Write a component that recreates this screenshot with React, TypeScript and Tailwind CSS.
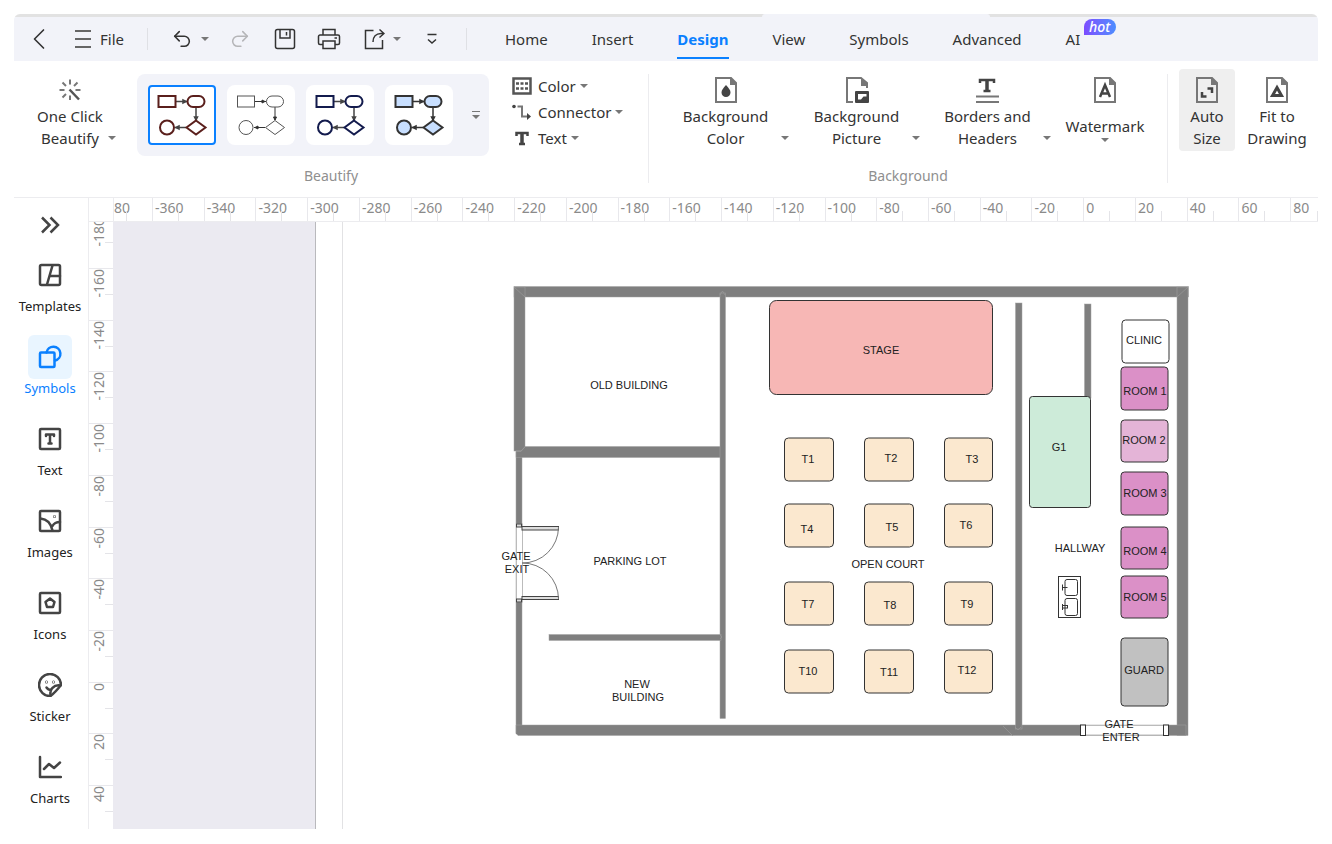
import type { ReactNode } from "react";
import { ChevronLeft, Redo2, Undo2 } from "lucide-react";

const tabs = ["Home", "Insert", "Design", "View", "Symbols", "Advanced"];

const themes = [
  { name: "Maroon outline", stroke: "#5a1f1c", fill: "none", link: "#444", width: 2, active: true },
  { name: "Thin outline", stroke: "#555", fill: "none", link: "#333", width: 1, active: false },
  { name: "Navy outline", stroke: "#131b4d", fill: "none", link: "#444", width: 2, active: false },
  { name: "Blue filled", stroke: "#333", fill: "#c8dfff", link: "#333", width: 2, active: false },
];

const topMarks = [
  -360, -340, -320, -300, -280, -260, -240, -220, -200, -180, -160,
  -140, -120, -100, -80, -60, -40, -20, 0, 20, 40, 60,
];
const leftMarks = [-160, -140, -120, -100, -80, -60, -40, -20, 0, 20];

const tableCols = [785, 865, 945];
const tableRows = [438, 504, 582, 650];

const rooms = [
  { x: 1122, y: 320, w: 47, h: 43, fill: "#ffffff" },
  { x: 1121, y: 367, w: 47, h: 43, fill: "#db90c7" },
  { x: 1121, y: 420, w: 47, h: 42, fill: "#e4b4d7" },
  { x: 1121, y: 472, w: 47, h: 43, fill: "#db90c7" },
  { x: 1121, y: 527, w: 47, h: 42, fill: "#db90c7" },
  { x: 1121, y: 576, w: 47, h: 42, fill: "#db90c7" },
  { x: 1121, y: 638, w: 47, h: 68, fill: "#c1c1c1" },
];

const labels = [
  { text: "OLD BUILDING", x: 629, y: 389 },
  { text: "PARKING LOT", x: 630, y: 565 },
  { text: "NEW", x: 637, y: 688 },
  { text: "BUILDING", x: 638, y: 701 },
  { text: "STAGE", x: 881, y: 354 },
  { text: "OPEN COURT", x: 888, y: 568 },
  { text: "HALLWAY", x: 1080, y: 552 },
  { text: "G1", x: 1059, y: 451 },
  { text: "CLINIC", x: 1144, y: 344 },
  { text: "ROOM 1", x: 1145, y: 395 },
  { text: "ROOM 2", x: 1144, y: 444 },
  { text: "ROOM 3", x: 1145, y: 497 },
  { text: "ROOM 4", x: 1145, y: 555 },
  { text: "ROOM 5", x: 1145, y: 601 },
  { text: "GUARD", x: 1144, y: 674 },
  { text: "GATE", x: 516, y: 560 },
  { text: "EXIT", x: 517, y: 573 },
  { text: "GATE", x: 1119, y: 728 },
  { text: "ENTER", x: 1121, y: 741 },
  { text: "T1", x: 808, y: 463 },
  { text: "T2", x: 891, y: 462 },
  { text: "T3", x: 972, y: 463 },
  { text: "T4", x: 807, y: 533 },
  { text: "T5", x: 892, y: 531 },
  { text: "T6", x: 966, y: 529 },
  { text: "T7", x: 808, y: 608 },
  { text: "T8", x: 890, y: 609 },
  { text: "T9", x: 967, y: 608 },
  { text: "T10", x: 808, y: 675 },
  { text: "T11", x: 889, y: 676 },
  { text: "T12", x: 967, y: 674 },
];

function Caret() {
  return (
    <svg viewBox="0 0 8 6" className="h-1.5 w-2 shrink-0" aria-hidden="true">
      <path d="M0 1h8L4 5z" fill="#777" />
    </svg>
  );
}

function Flow({ stroke, fill, link, width }: { stroke: string; fill: string; link: string; width: number }) {
  return (
    <svg viewBox="0 0 68 60" className="h-full w-full" fill="none" aria-hidden="true">
      <g stroke={link} strokeWidth={width > 1 ? 1.5 : 1}>
        <path d="M28 16.500h11M48 22v13M38 42.500H27" />
        <path d="M35 15l3 1.500-3 1.500zM46.500 32l1.500 3 1.500-3zM31 41l-3 1.500 3 1.500z" fill={link} />
      </g>
      <g stroke={stroke} fill={fill} strokeWidth={width}>
        <rect x="10.500" y="11" width="17" height="11" />
        <rect x="39.500" y="11" width="17" height="11" rx="5.500" />
        <circle cx="19" cy="42.500" r="7" />
        <path d="M48 35.500l9.500 7-9.500 7-9.500-7z" />
      </g>
    </svg>
  );
}

function PageIcon({ children }: { children: ReactNode }) {
  return (
    <svg viewBox="0 0 24 26" className="h-[26px] w-6" fill="none" aria-hidden="true">
      <path d="M2 1h15l5 5v19H2z" stroke="#777" strokeWidth="2" />
      <path d="M16 1h1l5 5v2h-6z" fill="#777" />
      {children}
    </svg>
  );
}

function RibbonButton({ icon, lines, width, caret = true, active = false }: {
  icon: ReactNode;
  lines: string[];
  width: string;
  caret?: boolean;
  active?: boolean;
}) {
  const cols = caret ? "grid-cols-[12px_1fr_12px]" : "grid-cols-1";
  return (
    <button className={`grid h-[82px] items-end justify-items-center rounded pt-2 ${cols} ${width} ${active ? "bg-[#efefef]" : ""}`}>
      {caret && <span />}
      <span className="flex flex-col items-center self-start whitespace-nowrap leading-[22px]">
        <span className="mb-0.5 flex h-[26px] items-center">{icon}</span>
        {lines.map((line) => (
          <span key={line}>{line}</span>
        ))}
      </span>
      {caret && <span className="pb-2.5"><Caret /></span>}
    </button>
  );
}

function SideIcon({ children }: { children: ReactNode }) {
  return (
    <svg viewBox="0 0 24 24" className="size-6" fill="none" stroke="currentColor" strokeWidth="2.500" strokeLinejoin="round" strokeLinecap="round" aria-hidden="true">
      {children}
    </svg>
  );
}

const sideItems = [
  {
    name: "Templates",
    icon: <><rect x="2" y="2" width="20" height="20" rx="1.500" /><path d="M14.500 2.500 9 21.500M12 13h10" /></>,
  },
  {
    name: "Symbols",
    active: true,
    icon: <><path d="M8.500 7.500A7 7 0 1 1 17 15.500" /><rect x="2" y="7.500" width="14.500" height="14.500" rx="1" /></>,
  },
  {
    name: "Text",
    icon: <><rect x="2" y="2" width="20" height="20" rx="1" /><path d="M8 9V7.500h8V9M12 7.500v8.500M10.500 16.500h3" /></>,
  },
  {
    name: "Images",
    icon: <><rect x="2" y="2" width="20" height="20" rx="1" /><path d="M2.500 9.500c6 .5 10.500 5 12 12M14.500 17c1.500-3 4-4 7.500-4" /><circle cx="16.500" cy="7.500" r="0.300" /></>,
  },
  {
    name: "Icons",
    icon: <><rect x="2" y="2" width="20" height="20" rx="1" /><path d="m12 7.500 4.500 3.500-1.500 5H9l-1.500-5z" /></>,
  },
  {
    name: "Sticker",
    icon: <><path d="M12.500 23A11 11 0 1 1 23 12c-3.500 4.500-6.500 8-10.500 11z" /><path d="M12.500 22.500c-1-6 3-11 10-10M8.500 14.500c1 1.500 2.500 2.500 4.500 2.500" /><circle cx="8.500" cy="9" r="0.300" /><circle cx="15.500" cy="9" r="0.300" /></>,
  },
  {
    name: "Charts",
    icon: <><path d="M2 2v20h21" /><path d="m6 14 5-5 5 4 6-5.500" /></>,
  },
];

function FloorPlan() {
  return (
    <svg viewBox="500 280 700 470" className="h-[470px] w-[700px] shrink-0" role="img" aria-label="Floor plan">
      {/* Walls */}
      <g fill="#7f7f7f" stroke="#a3a3a3" strokeWidth="0.500">
        <rect x="514" y="286.500" width="674.500" height="10.500" />
        <rect x="1177" y="287" width="11" height="448.500" />
        <rect x="514" y="287" width="11" height="164" />
        <rect x="516" y="451" width="6" height="282" />
        <path d="M525 446.500h199v11H516v-6h5z" />
        <path d="M516 725h670v10.500H518l-2-2z" />
        <rect x="720" y="293" width="5.500" height="425.500" />
        <rect x="549" y="634.500" width="172" height="6" />
        <rect x="1015.500" y="303" width="6.500" height="426" />
        <rect x="1084.500" y="304" width="6.500" height="94" />
      </g>
      <g stroke="#999" strokeWidth="0.700" fill="none">
        <path d="M514 287l11 10M1188 287l-11 10M521 451l4-4M1003 726l10 10M1015 727l3 3 3-3" />
        <path d="M720 295l2.500-4 2.500 4M720 635l2 2-2 2" />
      </g>

      {/* Exit gate */}
      <g fill="none" stroke="#444">
        <rect x="516.500" y="524" width="6" height="78" fill="#fff" stroke="#bbb" />
        <rect x="516.500" y="524" width="5" height="3" fill="#ddd" />
        <rect x="516.500" y="599" width="5" height="3" fill="#ddd" />
        <rect x="522" y="526.500" width="36.500" height="3.500" fill="#ddd" />
        <rect x="522" y="596.500" width="36.500" height="3" fill="#ddd" />
        <path d="M558.500 527A36 36 0 0 1 522 563A36 36 0 0 1 558.500 599" stroke="#777" />
      </g>

      {/* Entrance gate */}
      <rect x="1085" y="725.500" width="79" height="9.500" fill="#fff" stroke="#bbb" />
      <g fill="#fff" stroke="#333">
        <rect x="1080.500" y="725" width="5" height="10.500" />
        <rect x="1163.500" y="725" width="5" height="10.500" />
      </g>

      {/* Furniture and rooms */}
      <g stroke="#333" strokeWidth="1">
        <rect x="769.500" y="300.500" width="223" height="94" rx="7" fill="#f7b7b5" />
        <rect x="1029.500" y="396.500" width="61" height="111" rx="3" fill="#cdebd9" />
        {tableRows.map((y) =>
          tableCols.map((x) => (
            <rect key={`${x}-${y}`} x={x - 0.5} y={y} width={x === 945 ? 48 : 49} height="43" rx="4" fill="#fbe8cf" />
          ))
        )}
        {rooms.map((room) => (
          <rect key={room.y} x={room.x} y={room.y} width={room.w} height={room.h} rx="3.500" fill={room.fill} />
        ))}
      </g>

      {/* Double sink */}
      <g fill="none" stroke="#333">
        <rect x="1058.500" y="576.500" width="22" height="41" />
        <rect x="1065" y="579.500" width="12.500" height="16" rx="2" />
        <rect x="1065" y="598.500" width="12.500" height="17" rx="2" />
        <path d="M1062.500 584.500v6M1062.500 587.500h5M1062.500 604v6" />
        <rect x="1062.500" y="605.500" width="5" height="2.500" />
      </g>

      <g className="font-['Liberation_Sans',Arial,sans-serif] text-[11px]" fill="#222" textAnchor="middle">
        {labels.map((label) => (
          <text key={`${label.text}-${label.y}`} x={label.x} y={label.y}>{label.text}</text>
        ))}
      </g>
    </svg>
  );
}

function MenuBar() {
  return (
    <div className="flex h-11 items-center bg-[#f2f3f9]">
      <button aria-label="Back" className="flex w-[50px] justify-center">
        <ChevronLeft className="size-9" strokeWidth={1.1} />
      </button>
      <button className="ml-[11px] flex w-[50px] items-center gap-[9px]">
        <svg viewBox="0 0 16 18" className="h-[18px] w-4 shrink-0" stroke="#666" strokeWidth="1.800" aria-hidden="true">
          <path d="M0 1h16M0 9h16M0 17h16" />
        </svg>
        File
      </button>
      <span className="ml-[22px] h-[22px] w-px bg-[#dfe0e5]" />

      <div className="ml-[23px] flex items-center gap-5">
        <button aria-label="Undo" className="flex items-center gap-2">
          <Undo2 className="size-[22px]" strokeWidth={1.7} />
          <Caret />
        </button>
        <button aria-label="Redo" className="text-[#b5b5b8]">
          <Redo2 className="size-[22px]" strokeWidth={1.7} />
        </button>
        <button aria-label="Save" className="ml-0.5">
          <svg viewBox="0 0 24 24" className="size-6" fill="none" stroke="currentColor" strokeWidth="1.500" aria-hidden="true">
            <rect x="2.500" y="2.500" width="19" height="19" rx="2" />
            <path d="M7 2.500v8.500h10V2.500M13.500 5v3.500" />
          </svg>
        </button>
        <button aria-label="Print">
          <svg viewBox="0 0 24 24" className="size-6" fill="none" stroke="currentColor" strokeWidth="1.500" aria-hidden="true">
            <path d="M6 8V2.500h12V8M6 17.500H3a1.500 1.500 0 0 1-1.500-1.500V9.500A1.500 1.500 0 0 1 3 8h18a1.500 1.500 0 0 1 1.500 1.500V16a1.500 1.500 0 0 1-1.500 1.500h-3M17.500 11h2.500" />
            <rect x="6" y="14" width="12" height="7.500" />
          </svg>
        </button>
        <button aria-label="Share" className="flex items-center gap-2">
          <svg viewBox="0 0 24 24" className="size-6" fill="none" stroke="currentColor" strokeWidth="1.500" aria-hidden="true">
            <path d="M12.500 3.500H4.500v18h17V13" />
            <path d="M18.500 2.500l4.500 4-4.500 4M23 6.500h-3c-5 0-8 3.500-8 8.500" />
          </svg>
          <Caret />
        </button>
        <button aria-label="More quick actions">
          <svg viewBox="0 0 16 16" className="ml-[3px] size-4" fill="none" stroke="currentColor" strokeWidth="1.500" aria-hidden="true">
            <path d="M3.500 3.500h9M4 8.500l4 3.500 4-3.500" />
          </svg>
        </button>
      </div>
      <span className="ml-[26px] h-[22px] w-px bg-[#dfe0e5]" />

      <nav className="ml-[38px] flex h-full gap-11">
        {tabs.map((tab) => (
          <button
            key={tab}
            className={`mb-0.5 border-b-2 pt-1 ${tab === "Design" ? "border-[#0a80ff] font-bold text-[#0a80ff]" : "border-transparent"}`}
          >
            {tab}
          </button>
        ))}
        <button className="relative mb-0.5 border-b-2 border-transparent pt-1">
          AI
          <span className="absolute left-[18px] top-0.5 h-4 w-8 rounded-lg rounded-bl-none bg-linear-to-r from-[#7b4bff] to-[#4a8cff] text-[14px] font-medium italic leading-4 text-white">
            hot
          </span>
        </button>
      </nav>
    </div>
  );
}

function Ribbon() {
  return (
    <div className="flex h-[137px] overflow-hidden border-b border-[#ececef] bg-white pt-2">
      <section className="flex w-[634px] shrink-0 flex-col">
        <div className="flex h-24 shrink-0">
          <div className="ml-2">
            <RibbonButton
              width="w-24"
              lines={["One Click", "Beautify"]}
              icon={
                <svg viewBox="0 0 24 24" className="size-6" fill="none" stroke="#555" strokeWidth="2" aria-hidden="true">
                  <path d="M12 1.500v5M12 17.500v4.500M1.500 12h5M17.500 12h5M4.500 4.500 8 8M19.500 4.500 16 8M4.500 19.500 8 16" stroke="#777" />
                  <path d="M11.500 11.500l9.500 10" strokeWidth="2.500" />
                </svg>
              }
            />
          </div>
          <div className="ml-[19px] mt-[5px] flex h-[82px] w-[352px] items-center gap-[11px] rounded-lg bg-[#f2f3f9] pl-[11px]">
            {themes.map((theme) => (
              <button
                key={theme.name}
                aria-label={theme.name}
                className={`h-[60px] w-[68px] bg-white ${theme.active ? "rounded outline-2 -outline-offset-2 outline-[#0a80ff]" : "rounded-lg"}`}
              >
                <Flow stroke={theme.stroke} fill={theme.fill} link={theme.link} width={theme.width} />
              </button>
            ))}
            <button aria-label="More styles" className="ml-2 flex flex-col items-center">
              <span className="h-px w-2 bg-[#777]" />
              <span className="mt-0.5"><Caret /></span>
            </button>
          </div>
          <div className="ml-[23px] mt-1 flex flex-col items-start">
            <button className="flex h-[26px] items-center gap-1.5">
              <svg viewBox="0 0 20 18" className="h-[18px] w-5" fill="none" stroke="#555" aria-hidden="true">
                <rect x="1.500" y="1.500" width="17" height="15" strokeWidth="2.500" />
                <path d="M4 6.500h12M4 11.500h12" strokeWidth="2.500" strokeDasharray="3 1.500" />
              </svg>
              <span className="flex items-center gap-1">Color <Caret /></span>
            </button>
            <button className="flex h-[26px] items-center gap-1.5">
              <svg viewBox="0 0 20 18" className="h-[18px] w-5" fill="none" stroke="#777" strokeWidth="2" aria-hidden="true">
                <path d="M5.500 3.500H10v10h5" />
                <circle cx="2" cy="3.500" r="1.800" fill="#444" stroke="none" />
                <path d="M15 10l4 3.500-4 3.500z" fill="#444" stroke="none" />
              </svg>
              <span className="flex items-center gap-1">Connector <Caret /></span>
            </button>
            <button className="flex h-[26px] items-center gap-1.5">
              <svg viewBox="0 0 20 18" className="h-[18px] w-5" fill="none" stroke="#444" aria-hidden="true">
                <path d="M4.500 7V4h11v3M7 15h6" strokeWidth="2.500" />
                <path d="M10 3v12" strokeWidth="3.500" />
              </svg>
              <span className="flex items-center gap-1">Text <Caret /></span>
            </button>
          </div>
        </div>
        <h2 className="text-center text-[14px] leading-[22px] text-[#8f8f8f]">Beautify</h2>
      </section>

      <section className="mb-3.5 mt-[5px] flex w-[520px] shrink-0 flex-col border-x border-[#ececef]">
        <div className="-mt-[5px] flex h-24 shrink-0 pl-[11px]">
          <RibbonButton
            width="w-[131px]"
            lines={["Background", "Color"]}
            icon={<PageIcon><path d="M12 8c3 3.500 4.500 5 4.500 7.500a4.500 4.500 0 0 1-9 0C7.500 13 9 11.500 12 8z" fill="#444" /></PageIcon>}
          />
          <RibbonButton
            width="w-[131px]"
            lines={["Background", "Picture"]}
            icon={
              <svg viewBox="0 0 24 26" className="h-[26px] w-6" fill="none" aria-hidden="true">
                <path d="M8 25H2V1h14l6 5v5" stroke="#777" strokeWidth="2" />
                <path d="M16 1l6 5.500V9h-6z" fill="#777" />
                <rect x="10" y="14" width="14" height="12" rx="1" fill="#444" />
                <path d="M13 17h8.500v2.500h-3l-2.500 3H13z" fill="#fff" />
              </svg>
            }
          />
          <RibbonButton
            width="w-[131px]"
            lines={["Borders and", "Headers"]}
            icon={
              <svg viewBox="0 0 24 26" className="h-[26px] w-6" fill="none" aria-hidden="true">
                <path d="M5 6V3h14v3M8.500 14h7" stroke="#444" strokeWidth="2.500" />
                <path d="M12 2v12" stroke="#444" strokeWidth="3.500" />
                <path d="M1 19.500h23M1 25h23" stroke="#777" strokeWidth="2" />
              </svg>
            }
          />
          <button className="flex h-[82px] w-[104px] flex-col items-center pt-2">
            <PageIcon><path d="M7 20l5-12 5 12M8.500 16.500h7" stroke="#444" strokeWidth="2.500" /></PageIcon>
            <span className="mt-3 leading-[22px]">Watermark</span>
            <Caret />
          </button>
        </div>
        <h2 className="text-center text-[14px] leading-[22px] text-[#8f8f8f]">Background</h2>
      </section>

      <section className="flex gap-2.5 pl-[11px]">
        <RibbonButton
          active
          caret={false}
          width="w-14"
          lines={["Auto", "Size"]}
          icon={<PageIcon><path d="M12.500 11.500H17V16M11.500 19.500H7V15" stroke="#444" strokeWidth="2.500" /></PageIcon>}
        />
        <RibbonButton
          caret={false}
          width="w-16"
          lines={["Fit to", "Drawing"]}
          icon={<PageIcon><path d="M12 10.500l4.500 8h-9z" stroke="#444" strokeWidth="3" /></PageIcon>}
        />
      </section>
    </div>
  );
}

export default function App() {
  return (
    <div className="flex min-h-screen flex-col bg-white px-3.5 pb-[15px] pt-3.5 font-['Noto_Sans','Segoe_UI',sans-serif] text-[15px] text-[#333]">
      <header className="overflow-hidden rounded-t-md">
        <div className="flex h-[3px] bg-[#e2e2e2]">
          <span className="ml-[748px] w-[228px] rounded-t bg-[#f2f3f9]" />
        </div>
        <MenuBar />
      </header>
      <Ribbon />

      <main className="flex grow">
        <aside className="flex w-[75px] shrink-0 flex-col items-center border-r border-[#ececef] pr-0.5 pt-4">
          <button aria-label="Expand panel" className="mb-[17px] flex h-[22px] items-center text-[#444]">
            <svg viewBox="0 0 20 18" className="h-[18px] w-5" fill="none" stroke="currentColor" strokeWidth="2.500" aria-hidden="true">
              <path d="M2 1.500 9.500 9 2 16.500M10.500 1.500 18 9l-7.500 7.500" />
            </svg>
          </button>
          <div className="flex flex-col gap-5">
            {sideItems.map((item) => (
              <button key={item.name} className={`flex flex-col items-center ${item.active ? "text-[#0a80ff]" : "text-[#444]"}`}>
                <span className={`flex size-11 items-center justify-center rounded-md ${item.active ? "bg-[#e9f5ff]" : ""}`}>
                  <SideIcon>{item.icon}</SideIcon>
                </span>
                <span className={`text-[13px] leading-[18px] ${item.active ? "" : "text-[#222]"}`}>{item.name}</span>
              </button>
            ))}
          </div>
        </aside>

        <div className="flex min-w-0 grow flex-col">
          {/* Horizontal ruler */}
          <div className="flex h-6 overflow-hidden border-b border-[#ececef] pl-6 text-[14px] leading-5 text-[#8a8a8a]">
            <div className="flex w-[39px] items-end justify-between border-l border-[#ececef]">
              <span className="self-start">80</span>
              <span className="-ml-2 mr-[25px] h-2.5 w-px shrink-0 bg-[#e4e4e8]" />
            </div>
            {topMarks.map((mark) => (
              <div key={mark} className="flex flex-1 items-end border-l border-[#e8e8ec]">
                <span className="w-[25px] self-start whitespace-nowrap pl-0.5">{mark}</span>
                <span className="h-2.5 w-px bg-[#e4e4e8]" />
              </div>
            ))}
            <div className="flex w-7 items-end border-l border-[#e8e8ec]">
              <span className="w-[26px] self-start pl-0.5">80</span>
              <span className="h-2.5 w-px bg-[#e4e4e8]" />
            </div>
          </div>

          <div className="flex grow">
            {/* Vertical ruler */}
            <div className="flex w-6 flex-col text-[14px] leading-5 text-[#8a8a8a]">
              <div className="flex h-[46px] flex-col items-end overflow-hidden">
                <span className="flex h-5 w-full items-end">
                  <span className="mb-[-5px] rotate-180 [writing-mode:vertical-rl]">-180</span>
                </span>
                <span className="h-px w-2 bg-[#e4e4e8]" />
              </div>
              {leftMarks.map((mark) => (
                <div key={mark} className="flex flex-1 flex-col items-end border-t border-[#e8e8ec]">
                  <span className="h-[25px] w-full">
                    <span className="block rotate-180 [writing-mode:vertical-rl]">{mark}</span>
                  </span>
                  <span className="h-px w-2 bg-[#e4e4e8]" />
                </div>
              ))}
              <div className="flex h-11 flex-col items-end border-t border-[#e8e8ec]">
                <span className="h-[25px] w-full">
                  <span className="block rotate-180 [writing-mode:vertical-rl]">40</span>
                </span>
                <span className="h-px w-2 bg-[#e4e4e8]" />
              </div>
            </div>

            {/* Pasteboard, page margin, page */}
            <div className="w-[203px] shrink-0 border-r border-[#b9b9bd] bg-[#ebeaf1]" />
            <div className="w-[27px] shrink-0 border-r border-[#e2e2e4]" />
            <div className="min-w-0 grow overflow-hidden pl-[157px] pt-[58px]">
              <FloorPlan />
            </div>
          </div>
        </div>
      </main>
    </div>
  );
}
